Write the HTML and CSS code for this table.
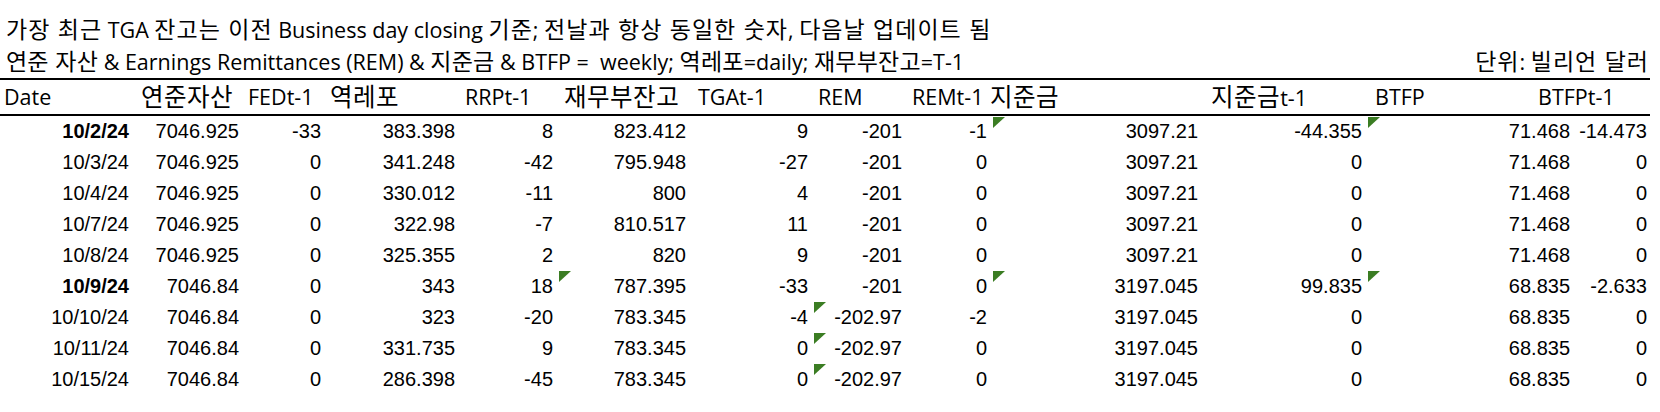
FILE: index.html
```html
<!DOCTYPE html>
<html lang="ko">
<head>
<meta charset="utf-8">
<title>TGA</title>
<link rel="stylesheet" href="styles.css">
</head>
<body>
<div class="sheet">
  <div class="notes">
    <div class="note"><span class="ko">가장 최근</span> TGA <span class="ko">잔고는 이전</span> Business day closing <span class="ko">기준</span>; <span class="ko">전날과 항상 동일한 숫자</span>, <span class="ko">다음날 업데이트 됨</span></div>
    <div class="note note-split">
      <span class="note-left"><span class="ko">연준 자산</span> &amp; Earnings Remittances (REM) &amp; <span class="ko">지준금</span> &amp; BTFP =&nbsp; weekly; <span class="ko">역레포</span>=daily; <span class="ko">재무부잔고</span>=T-1</span>
      <span class="unit"><span class="ko">단위</span>: <span class="ko">빌리언 달러</span></span>
    </div>
  </div>
  <table class="grid">
    <colgroup>
      <col class="w1"><col class="w2"><col class="w3"><col class="w4"><col class="w5"><col class="w6"><col class="w7"><col class="w8"><col class="w9"><col class="w10"><col class="w11"><col class="w12"><col class="w13">
    </colgroup>
    <thead>
      <tr>
        <th class="h1">Date</th><th class="h2"><span class="ko">연준자산</span></th><th class="h3">FEDt-1</th><th class="h4"><span class="ko">역레포</span></th><th class="h5">RRPt-1</th><th class="h6"><span class="ko">재무부잔고</span></th><th class="h7">TGAt-1</th><th class="h8">REM</th><th class="h9">REMt-1</th><th class="h10"><span class="ko">지준금</span></th><th class="h11"><span class="ko">지준금</span>t-1</th><th class="h12">BTFP</th><th class="h13">BTFPt-1</th>
      </tr>
    </thead>
    <tbody>
      <tr><td class="b">10/2/24</td><td>7046.925</td><td>-33</td><td>383.398</td><td>8</td><td>823.412</td><td>9</td><td>-201</td><td>-1</td><td class="flag">3097.21</td><td>-44.355</td><td class="flag">71.468</td><td>-14.473</td></tr>
      <tr><td>10/3/24</td><td>7046.925</td><td>0</td><td>341.248</td><td>-42</td><td>795.948</td><td>-27</td><td>-201</td><td>0</td><td>3097.21</td><td>0</td><td>71.468</td><td>0</td></tr>
      <tr><td>10/4/24</td><td>7046.925</td><td>0</td><td>330.012</td><td>-11</td><td>800</td><td>4</td><td>-201</td><td>0</td><td>3097.21</td><td>0</td><td>71.468</td><td>0</td></tr>
      <tr><td>10/7/24</td><td>7046.925</td><td>0</td><td>322.98</td><td>-7</td><td>810.517</td><td>11</td><td>-201</td><td>0</td><td>3097.21</td><td>0</td><td>71.468</td><td>0</td></tr>
      <tr><td>10/8/24</td><td>7046.925</td><td>0</td><td>325.355</td><td>2</td><td>820</td><td>9</td><td>-201</td><td>0</td><td>3097.21</td><td>0</td><td>71.468</td><td>0</td></tr>
      <tr><td class="b">10/9/24</td><td>7046.84</td><td>0</td><td>343</td><td>18</td><td class="flag">787.395</td><td>-33</td><td>-201</td><td>0</td><td class="flag">3197.045</td><td>99.835</td><td class="flag">68.835</td><td>-2.633</td></tr>
      <tr><td>10/10/24</td><td>7046.84</td><td>0</td><td>323</td><td>-20</td><td>783.345</td><td>-4</td><td class="flag">-202.97</td><td>-2</td><td>3197.045</td><td>0</td><td>68.835</td><td>0</td></tr>
      <tr><td>10/11/24</td><td>7046.84</td><td>0</td><td>331.735</td><td>9</td><td>783.345</td><td>0</td><td class="flag">-202.97</td><td>0</td><td>3197.045</td><td>0</td><td>68.835</td><td>0</td></tr>
      <tr><td>10/15/24</td><td>7046.84</td><td>0</td><td>286.398</td><td>-45</td><td>783.345</td><td>0</td><td class="flag">-202.97</td><td>0</td><td>3197.045</td><td>0</td><td>68.835</td><td>0</td></tr>
    </tbody>
  </table>
</div>
</body>
</html>
```
FILE: styles.css
```css
html, body {
  margin: 0;
  padding: 0;
  background: #ffffff;
  color: #000000;
}
.sheet {
  width: 1660px;
  padding-top: 12px;
}
.notes {
  width: 1650px;
}
.note {
  height: 32px;
  line-height: 32px;
  padding-left: 6px;
  font-family: "Open Sans", "Noto Sans CJK KR", sans-serif;
  font-size: 21.5px;
  white-space: nowrap;
}
.ko {
  font-family: "Noto Sans CJK KR", sans-serif;
  font-size: 23px;
  letter-spacing: 1px;
}
.note-split {
  display: flex;
  justify-content: space-between;
  align-items: flex-end;
  margin-top: 2px;
}
.note-left .ko {
  letter-spacing: 0.2px;
}
.unit {
  padding-right: 1px;
}
.grid {
  border-collapse: collapse;
  table-layout: fixed;
  width: 1650px;
}
.w1 { width: 133px; }
.w2 { width: 110px; }
.w3 { width: 82px; }
.w4 { width: 134px; }
.w5 { width: 98px; }
.w6 { width: 133px; }
.w7 { width: 122px; }
.w8 { width: 94px; }
.w9 { width: 85px; }
.w10 { width: 211px; }
.w11 { width: 164px; }
.w12 { width: 208px; }
.w13 { width: 76px; }
.grid thead tr {
  border-top: 2px solid #000;
  border-bottom: 2px solid #000;
}
.grid th {
  height: 32px;
  padding: 0;
  font-family: "Open Sans", "Noto Sans CJK KR", sans-serif;
  font-weight: normal;
  font-size: 21.5px;
  line-height: 32px;
  text-align: left;
  white-space: nowrap;
  overflow: visible;
}
.grid th .ko {
  font-size: 24.5px;
  letter-spacing: 0.5px;
}
.h1 { text-indent: 4px; }
.h2 { text-indent: 8px; }
.h3 { text-indent: 5px; }
.h4 { text-indent: 5px; }
.h5 { text-indent: 6px; }
.h6 { text-indent: 7px; }
.h7 { text-indent: 8px; }
.h8 { text-indent: 6px; }
.h9 { text-indent: 6px; }
.h10 { text-indent: -1px; }
.h11 { text-indent: 9px; }
.h12 { text-indent: 9px; }
.h13 { text-indent: -36px; }
.grid td {
  position: relative;
  height: 31px;
  padding: 0 4px 3px 0;
  box-sizing: border-box;
  vertical-align: bottom;
  font-family: "Liberation Sans", Arial, sans-serif;
  font-size: 20px;
  line-height: 23px;
  text-align: right;
  white-space: nowrap;
}
.grid td:last-child {
  padding-right: 3px;
}
.grid td.b {
  font-weight: bold;
}
.grid td.flag::before {
  content: "";
  position: absolute;
  left: 2px;
  top: 1px;
  width: 12px;
  height: 11px;
  background: #3b7d23;
  clip-path: polygon(0 0, 100% 0, 0 100%);
}
```
